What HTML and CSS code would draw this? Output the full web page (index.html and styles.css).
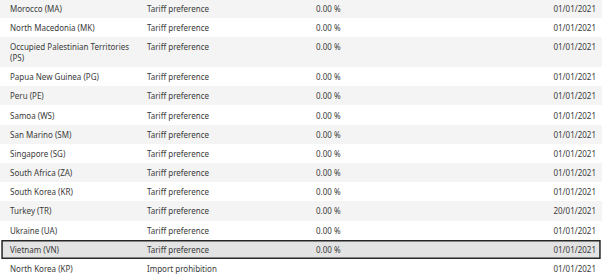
FILE: index.html
```html
<!DOCTYPE html>
<html lang="en">
<head>
<meta charset="utf-8">
<title>Measures</title>
<link rel="stylesheet" href="styles.css">
</head>
<body>
<table class="measures">
  <colgroup>
    <col class="c-country">
    <col class="c-type">
    <col class="c-duty">
    <col class="c-date">
  </colgroup>
  <tbody>
    <tr class="odd"><td class="country">Morocco (MA)</td><td>Tariff preference</td><td>0.00 %</td><td class="date">01/01/2021</td></tr>
    <tr><td class="country">North Macedonia (MK)</td><td>Tariff preference</td><td>0.00 %</td><td class="date">01/01/2021</td></tr>
    <tr class="odd"><td class="country">Occupied Palestinian Territories (PS)</td><td>Tariff preference</td><td>0.00 %</td><td class="date">01/01/2021</td></tr>
    <tr><td class="country">Papua New Guinea (PG)</td><td>Tariff preference</td><td>0.00 %</td><td class="date">01/01/2021</td></tr>
    <tr class="odd"><td class="country">Peru (PE)</td><td>Tariff preference</td><td>0.00 %</td><td class="date">01/01/2021</td></tr>
    <tr><td class="country">Samoa (WS)</td><td>Tariff preference</td><td>0.00 %</td><td class="date">01/01/2021</td></tr>
    <tr class="odd"><td class="country">San Marino (SM)</td><td>Tariff preference</td><td>0.00 %</td><td class="date">01/01/2021</td></tr>
    <tr><td class="country">Singapore (SG)</td><td>Tariff preference</td><td>0.00 %</td><td class="date">01/01/2021</td></tr>
    <tr class="odd"><td class="country">South Africa (ZA)</td><td>Tariff preference</td><td>0.00 %</td><td class="date">01/01/2021</td></tr>
    <tr><td class="country">South Korea (KR)</td><td>Tariff preference</td><td>0.00 %</td><td class="date">01/01/2021</td></tr>
    <tr class="odd"><td class="country">Turkey (TR)</td><td>Tariff preference</td><td>0.00 %</td><td class="date">20/01/2021</td></tr>
    <tr><td class="country">Ukraine (UA)</td><td>Tariff preference</td><td>0.00 %</td><td class="date">01/01/2021</td></tr>
    <tr class="selected"><td class="country">Vietnam (VN)</td><td>Tariff preference</td><td>0.00 %</td><td class="date">01/01/2021</td></tr>
    <tr><td class="country">North Korea (KP)</td><td>Import prohibition</td><td></td><td class="date">01/01/2021</td></tr>
  </tbody>
</table>
</body>
</html>
```

FILE: styles.css
```css
html, body {
  margin: 0;
  padding: 0;
  background: #ffffff;
}

body {
  font-family: "Noto Sans", "Open Sans", sans-serif;
  font-size: 8px;
  color: #3a3a3a;
  overflow: hidden;
}

.measures {
  width: 602px;
  table-layout: fixed;
  border-collapse: separate;
  border-spacing: 0;
  margin-top: -1.5px;
}

.c-country { width: 147px; }
.c-type { width: 169px; }
.c-duty { width: 180px; }
.c-date { width: 106px; }

.measures td {
  padding: 4.1px 0;
  line-height: 11px;
  vertical-align: top;
}

.measures td.country {
  padding-left: 10px;
  padding-right: 16px;
}

.measures td.date {
  text-align: right;
  padding-right: 6px;
}

.measures tr.odd td {
  background: #f4f4f4;
}

.measures tr.selected td {
  background: #e3e3e3;
  box-shadow: inset 0 1.5px 0 #262626, inset 0 -1.5px 0 #262626;
}

.measures tr.selected td:first-child {
  box-shadow: inset 1.3px 0 0 #ffffff, inset 2.8px 0 0 #262626, inset 0 1.5px 0 #262626, inset 0 -1.5px 0 #262626;
}

.measures tr.selected td:last-child {
  box-shadow: inset -1.3px 0 0 #ffffff, inset -2.8px 0 0 #262626, inset 0 1.5px 0 #262626, inset 0 -1.5px 0 #262626;
}
```
